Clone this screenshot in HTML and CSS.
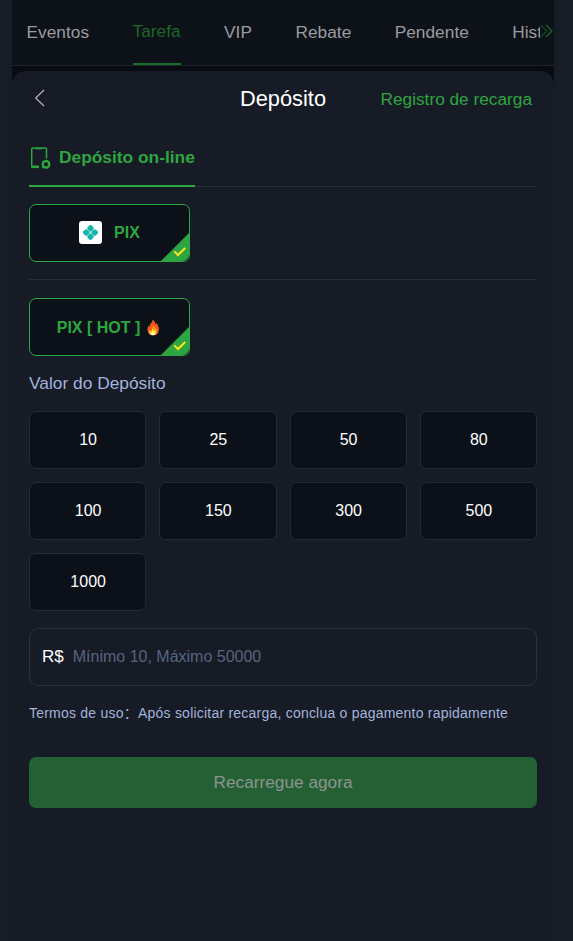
FILE: index.html
```html
<!DOCTYPE html>
<html lang="pt">
<head>
<meta charset="utf-8">
<title>Depósito</title>
<link rel="stylesheet" href="styles.css">
</head>
<body>
<svg class="defs" width="0" height="0">
  <symbol id="check" viewBox="0 0 28 28">
    <path d="M28 0V21A7 7 0 0 1 21 28H0Z" fill="#2da641"/>
    <path d="M13.3 18.4L17 22L24.2 15" fill="none" stroke="#ffe51a" stroke-width="2"/>
  </symbol>
</svg>
<div class="app">
  <nav class="tabs">
    <a class="tab">Eventos</a>
    <a class="tab active">Tarefa</a>
    <a class="tab">VIP</a>
    <a class="tab">Rebate</a>
    <a class="tab">Pendente</a>
    <a class="tab">Histórico</a>
    <span class="more"><svg width="14" height="16" viewBox="0 0 14 16" fill="none" stroke="#1b6c29" stroke-width="1.1"><path d="M.7 2L6.7 8L.7 14" opacity=".65"/><path d="M6 2L12 8L6 14"/></svg></span>
  </nav>
  <main class="sheet">
    <header class="head">
      <svg class="back" width="12" height="18" viewBox="0 0 12 18" fill="none" stroke="#b5b7bc" stroke-width="1.2"><path d="M10 1L1.7 9L10 17"/></svg>
      <h1>Depósito</h1>
      <a class="record">Registro de recarga</a>
    </header>
    <div class="methods">
      <div class="method">
        <svg width="22" height="22" viewBox="0 0 22 22" fill="none" stroke="#2ea640"><path d="M2.7 19V2.2Q2.7 1 4 1H16.3Q17.5 1 17.5 2.2V11.5" stroke-width="1.5"/><path d="M2.2 19.8H10" stroke-width="2.6"/><path d="M6.5 1.8H13.5" stroke-width="1"/><circle cx="17" cy="17.3" r="3.3" stroke-width="2.3"/><path d="M13 20.7H15M13 14.5L14.5 15.6M21 14.5L19.4 15.8" stroke-width="1"/></svg>
        <span>Depósito on-line</span>
      </div>
    </div>
    <div class="channels">
      <div class="pick pix">
        <svg width="23" height="23" viewBox="0 0 23 23"><rect width="23" height="23" rx="3" fill="#fff"/><g fill="#13b5ad"><rect x="-2.8" y="-2.8" width="5.6" height="5.6" rx="1.7" transform="translate(11.5 7.2) rotate(45)"/><rect x="-2.8" y="-2.8" width="5.6" height="5.6" rx="1.7" transform="translate(11.5 15.8) rotate(45)"/><rect x="-2.8" y="-2.8" width="5.6" height="5.6" rx="1.7" transform="translate(7.2 11.5) rotate(45)"/><rect x="-2.8" y="-2.8" width="5.6" height="5.6" rx="1.7" transform="translate(15.8 11.5) rotate(45)"/></g><path d="M8.6 8.6L14.4 14.4M14.4 8.6L8.6 14.4" stroke="#7ad6d1" stroke-width=".8"/></svg>
        <span>PIX</span>
        <svg class="mark"><use href="#check"/></svg>
      </div>
    </div>
    <div class="pick hot">
      <span>PIX [ HOT ]</span>
      <svg width="14" height="17" viewBox="0 0 14 17"><path d="M6.5 .6C9 2.2 9.4 4 9.6 5.5C10.2 5 10.4 4.5 10.3 3.8C13.6 7.5 13.6 12 11.5 14.7C9 17 4.5 16.8 2.6 14.2C.8 11.2 1.2 8.5 2.7 6.4C2.8 7 3 7.4 3.7 7.6C3.5 4.6 7 3.8 6.5 .6Z" fill="#f3591c"/><path d="M7 6.5C9 9 11.5 9.4 11 12.7C10.4 15.4 8.9 16.1 7 16.1C4.6 16.1 2.8 15 2.7 12.5L3.5 10.5L5 12.2Z" fill="#ff931e"/><path d="M6.8 9.7C7.4 11.4 8.6 11.5 9.1 10.9C10.9 13.5 9.7 16.2 6.9 16.2C4.2 16.2 2.8 14 3.9 11.7L5.2 12.9Z" fill="#ffe23e"/><ellipse cx="6.8" cy="14.5" rx="2" ry="1.5" fill="#fff9c9"/></svg>
      <svg class="mark"><use href="#check"/></svg>
    </div>
    <h2>Valor do Depósito</h2>
    <div class="amounts">
      <div class="amount">10</div><div class="amount">25</div><div class="amount">50</div><div class="amount">80</div>
      <div class="amount">100</div><div class="amount">150</div><div class="amount">300</div><div class="amount">500</div>
      <div class="amount">1000</div>
    </div>
    <div class="field"><span class="currency">R$</span><span class="hint">Mínimo 10, Máximo 50000</span></div>
    <p class="terms"><span class="label">Termos de uso：</span><span>Após solicitar recarga, conclua o pagamento rapidamente</span></p>
    <div class="submit">Recarregue agora</div>
  </main>
</div>
</body>
</html>
```
FILE: styles.css
```css
* { box-sizing: border-box; }
body {
  margin: 0;
  height: 941px;
  overflow: hidden;
  background: #171d26;
  font: 17.25px/20px "Liberation Sans", "Noto Sans CJK SC", sans-serif;
  color: #2ea640;
}
svg { display: block; flex: none; }
.defs { position: absolute; }
.app {
  width: 542px;
  height: 941px;
  margin-left: 12px;
  background: #080b11;
  overflow: hidden;
}
.tabs {
  position: relative;
  display: flex;
  gap: 43.4px;
  height: 66px;
  padding-left: 14.5px;
  background: #0d1118;
  border-bottom: 1px solid #1e232a;
  border-top: 1px solid #080e19;
  color: #9b9c9f;
  overflow: hidden;
}
.tab { flex: none; padding-top: 21px; letter-spacing: .04px; }
.tab.active {
  height: 64px;
  padding-top: 20px;
  border-bottom: 2px solid #1d6b29;
  color: #1b6827;
}
.more {
  position: absolute;
  right: 0;
  top: 0;
  width: 14px;
  height: 63px;
  padding-top: 22px;
  background: #0d1118;
}
.sheet {
  height: 870px;
  margin-top: 5px;
  padding: 0 17px;
  border-radius: 14px 14px 0 0;
  background: #161b26;
}
.head {
  display: grid;
  grid-template-columns: 1fr auto 1fr;
  align-items: center;
  height: 56px;
  padding: 0 5px;
}
h1 { margin: 0; font-size: 21.8px; font-weight: 400; color: #fff; }
.back { margin-top: -3px; }
.record { justify-self: end; white-space: nowrap; }
.methods { display: flex; height: 60px; border-bottom: 1px solid #2a303b; }
.method {
  display: flex;
  gap: 8px;
  height: 60px;
  padding-top: 20px;
  border-bottom: 2px solid #2ea640;
  font-weight: 700;
  font-size: 17.35px;
}
.channels { height: 93px; padding-top: 17px; border-bottom: 1px solid #2a303b; }
.pick {
  position: relative;
  display: flex;
  align-items: center;
  justify-content: center;
  width: 161px;
  height: 58px;
  border: 1px solid #2da641;
  border-radius: 7px;
  background: #0c1119;
  font-size: 16px;
  font-weight: 700;
}
.pix { gap: 12px; }
.pix > svg:first-child { margin-top: -1px; }
.hot { gap: 6px; margin-top: 18px; padding-right: 2px; }
.hot span { padding-top: 1px; }
.mark { position: absolute; right: 0; bottom: 0; width: 28px; height: 28px; }
h2 { margin: 17px 0 18px; font-size: 17.35px; font-weight: 400; color: #a3b3da; }
.amounts {
  display: grid;
  grid-template-columns: repeat(4, 1fr);
  gap: 13px;
}
.amount {
  height: 58px;
  padding-left: 1px;
  border: 1px solid #242a33;
  border-radius: 7px;
  background: #0c1119;
  color: #fff;
  font-size: 16px;
  line-height: 56px;
  text-align: center;
}
.field {
  display: flex;
  align-items: center;
  gap: 9px;
  height: 58px;
  margin-top: 17px;
  padding: 0 12px;
  border: 1px solid #2b313c;
  border-radius: 9px;
  font-size: 16px;
}
.currency { font-size: 17px; color: #fff; }
.hint { color: #58647f; }
.terms {
  display: flex;
  margin: 17px 0 34px;
  font-size: 14px;
  letter-spacing: .22px;
  white-space: nowrap;
  color: #a3b3da;
}
.label { width: 109px; }
.submit {
  height: 51px;
  border-radius: 7px;
  background: #246034;
  color: #8b958f;
  line-height: 51px;
  text-align: center;
}
```
